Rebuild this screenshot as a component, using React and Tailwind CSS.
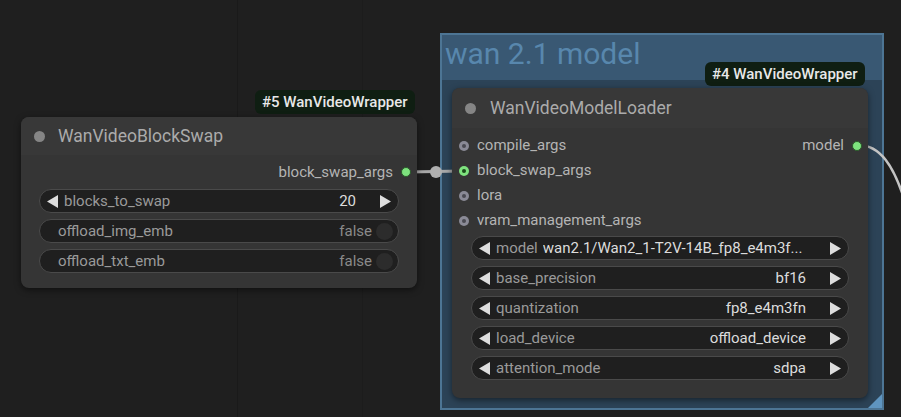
import React from 'react';

const ArrowL = () => (
  <svg width="11" height="13" viewBox="0 0 11 13" className="shrink-0">
    <path d="M11 0 L0 6.5 L11 13 Z" fill="#dedede" />
  </svg>
);
const ArrowR = () => (
  <svg width="11" height="13" viewBox="0 0 11 13" className="shrink-0">
    <path d="M0 0 L11 6.5 L0 13 Z" fill="#dedede" />
  </svg>
);

const ComboWidget = ({ label, value }) => (
  <div className="flex h-[24px] items-center rounded-full border border-[#4a4a4a] bg-[#1f1f1f] pl-[7px] pr-[7px]">
    <ArrowL />
    <span className="ml-[6px] shrink-0 text-[#9a9a9a]">{label}</span>
    <span className="ml-[8px] flex-1 truncate text-right text-[#dcdcdc]">{value}</span>
    <span className="ml-[24px] flex"><ArrowR /></span>
  </div>
);

const ToggleWidget = ({ label }) => (
  <div className="flex h-[24px] items-center rounded-full border border-[#4a4a4a] bg-[#1f1f1f] pl-[18px] pr-[5px]">
    <span className="flex-1 text-[#9a9a9a]">{label}</span>
    <span className="text-[#8a8a8a]">false</span>
    <span className="ml-[4px] h-[17px] w-[17px] rounded-full bg-[#2c2c2c]" />
  </div>
);

const InputSlot = ({ label, active }) => (
  <div className="flex h-[25px] items-center">
    <span
      className={`flex h-[10px] w-[10px] items-center justify-center rounded-full ${
        active ? 'bg-[#7ee27e]' : 'bg-[#8a8a96]'
      }`}
    >
      <span className={`h-[4px] w-[4px] rounded-full ${active ? 'bg-[#1c4a1c]' : 'bg-[#4a4a52]'}`} />
    </span>
    <span className="ml-[8px] text-[#b4b4b4]">{label}</span>
  </div>
);

const Badge = ({ children, className }) => (
  <div className={`absolute flex h-[24px] items-center rounded-md bg-[#0f1e12] px-[7px] text-[15px] font-medium text-[#e8e8e8] ${className}`}>
    {children}
  </div>
);

export default function App() {
  return (
    <div className="relative h-[417px] w-[901px] overflow-hidden bg-[#1f1f1f] font-['Roboto',sans-serif] text-[15px]">
      {/* faint grid */}
      <div className="absolute left-[237px] top-0 h-full w-px bg-[#1a1a1a]" />
      <div className="absolute left-[362px] top-0 h-full w-px bg-[#1c1c1c]" />

      {/* group */}
      <div className="absolute left-[440px] top-[33px] flex h-[377px] w-[444px] flex-col border-2 border-[#4d7594] bg-[#2c4357]">
        <div className="h-[45px] bg-[#395873] pl-[3px] text-[30px] leading-[38px] text-[#5887ad]">wan 2.1 model</div>
        <div className="flex-1" />
        <div className="absolute bottom-0 right-0 h-0 w-0 border-b-[14px] border-l-[14px] border-b-[#5f95c0] border-l-transparent" />
      </div>

      {/* links */}
      <svg className="absolute left-0 top-0" width="901" height="417">
        <line x1="408" y1="172" x2="462" y2="171" stroke="#a8a8a8" strokeWidth="3" />
        <circle cx="436" cy="172" r="6" fill="#b0b0b0" />
        <path d="M 858 145 C 880 145, 894 165, 906 205" fill="none" stroke="#c4c4c4" strokeWidth="2.5" />
      </svg>

      {/* node #5 */}
      <Badge className="left-[255px] top-[90px]">#5 WanVideoWrapper</Badge>
      <div className="absolute left-[21px] top-[117px] h-[171px] w-[396px] rounded-[8px] bg-[#353535] shadow-[0_2px_6px_rgba(0,0,0,0.5)]">
        <div className="flex h-[38px] items-center rounded-t-[8px] bg-[#383838] pl-[13px]">
          <span className="h-[11px] w-[11px] rounded-full bg-[#858585]" />
          <span className="ml-[13px] text-[17.5px] text-[#ababab]">WanVideoBlockSwap</span>
        </div>
        <div className="flex h-[34px] items-center justify-end pr-[6px]">
          <span className="text-[#b4b4b4]">block_swap_args</span>
          <span className="ml-[8px] h-[10px] w-[10px] rounded-full border border-[#2a5a2a] bg-[#7ee27e]" />
        </div>
        <div className="mx-[18px] flex flex-col gap-[6px]">
          <div className="flex h-[24px] items-center rounded-full border border-[#4a4a4a] bg-[#1f1f1f] pl-[7px] pr-[7px]">
            <ArrowL />
            <span className="ml-[6px] flex-1 text-[#9a9a9a]">blocks_to_swap</span>
            <span className="text-[#dcdcdc]">20</span>
            <span className="ml-[24px] flex"><ArrowR /></span>
          </div>
          <ToggleWidget label="offload_img_emb" />
          <ToggleWidget label="offload_txt_emb" />
        </div>
      </div>

      {/* node #4 */}
      <Badge className="left-[705px] top-[62px]">#4 WanVideoWrapper</Badge>
      <div className="absolute left-[452px] top-[88px] h-[310px] w-[416px] rounded-[8px] bg-[#353535] shadow-[0_2px_6px_rgba(0,0,0,0.5)]">
        <div className="flex h-[40px] items-center rounded-t-[8px] bg-[#383838] pl-[13px]">
          <span className="h-[11px] w-[11px] rounded-full bg-[#858585]" />
          <span className="ml-[14px] text-[17.5px] text-[#ababab]">WanVideoModelLoader</span>
        </div>
        <div className="relative pl-[7px] pt-[5px]">
          <InputSlot label="compile_args" />
          <InputSlot label="block_swap_args" active />
          <InputSlot label="lora" />
          <InputSlot label="vram_management_args" />
          <div className="absolute right-[6px] top-[5px] flex h-[25px] items-center">
            <span className="text-[#b4b4b4]">model</span>
            <span className="ml-[8px] h-[10px] w-[10px] rounded-full border border-[#2a5a2a] bg-[#7ee27e]" />
          </div>
        </div>
        <div className="mx-[19px] mt-[3px] flex flex-col gap-[6px]">
          <div className="flex h-[24px] items-center rounded-full border border-[#4a4a4a] bg-[#1f1f1f] pl-[7px] pr-[7px]">
            <ArrowL />
            <span className="ml-[6px] shrink-0 text-[#9a9a9a]">model</span>
            <span className="ml-[5px] flex-1 truncate text-[#dcdcdc]">wan2.1/Wan2_1-T2V-14B_fp8_e4m3f...</span>
            <span className="ml-[20px] flex"><ArrowR /></span>
          </div>
          <ComboWidget label="base_precision" value="bf16" />
          <ComboWidget label="quantization" value="fp8_e4m3fn" />
          <ComboWidget label="load_device" value="offload_device" />
          <ComboWidget label="attention_mode" value="sdpa" />
        </div>
      </div>
    </div>
  );
}
